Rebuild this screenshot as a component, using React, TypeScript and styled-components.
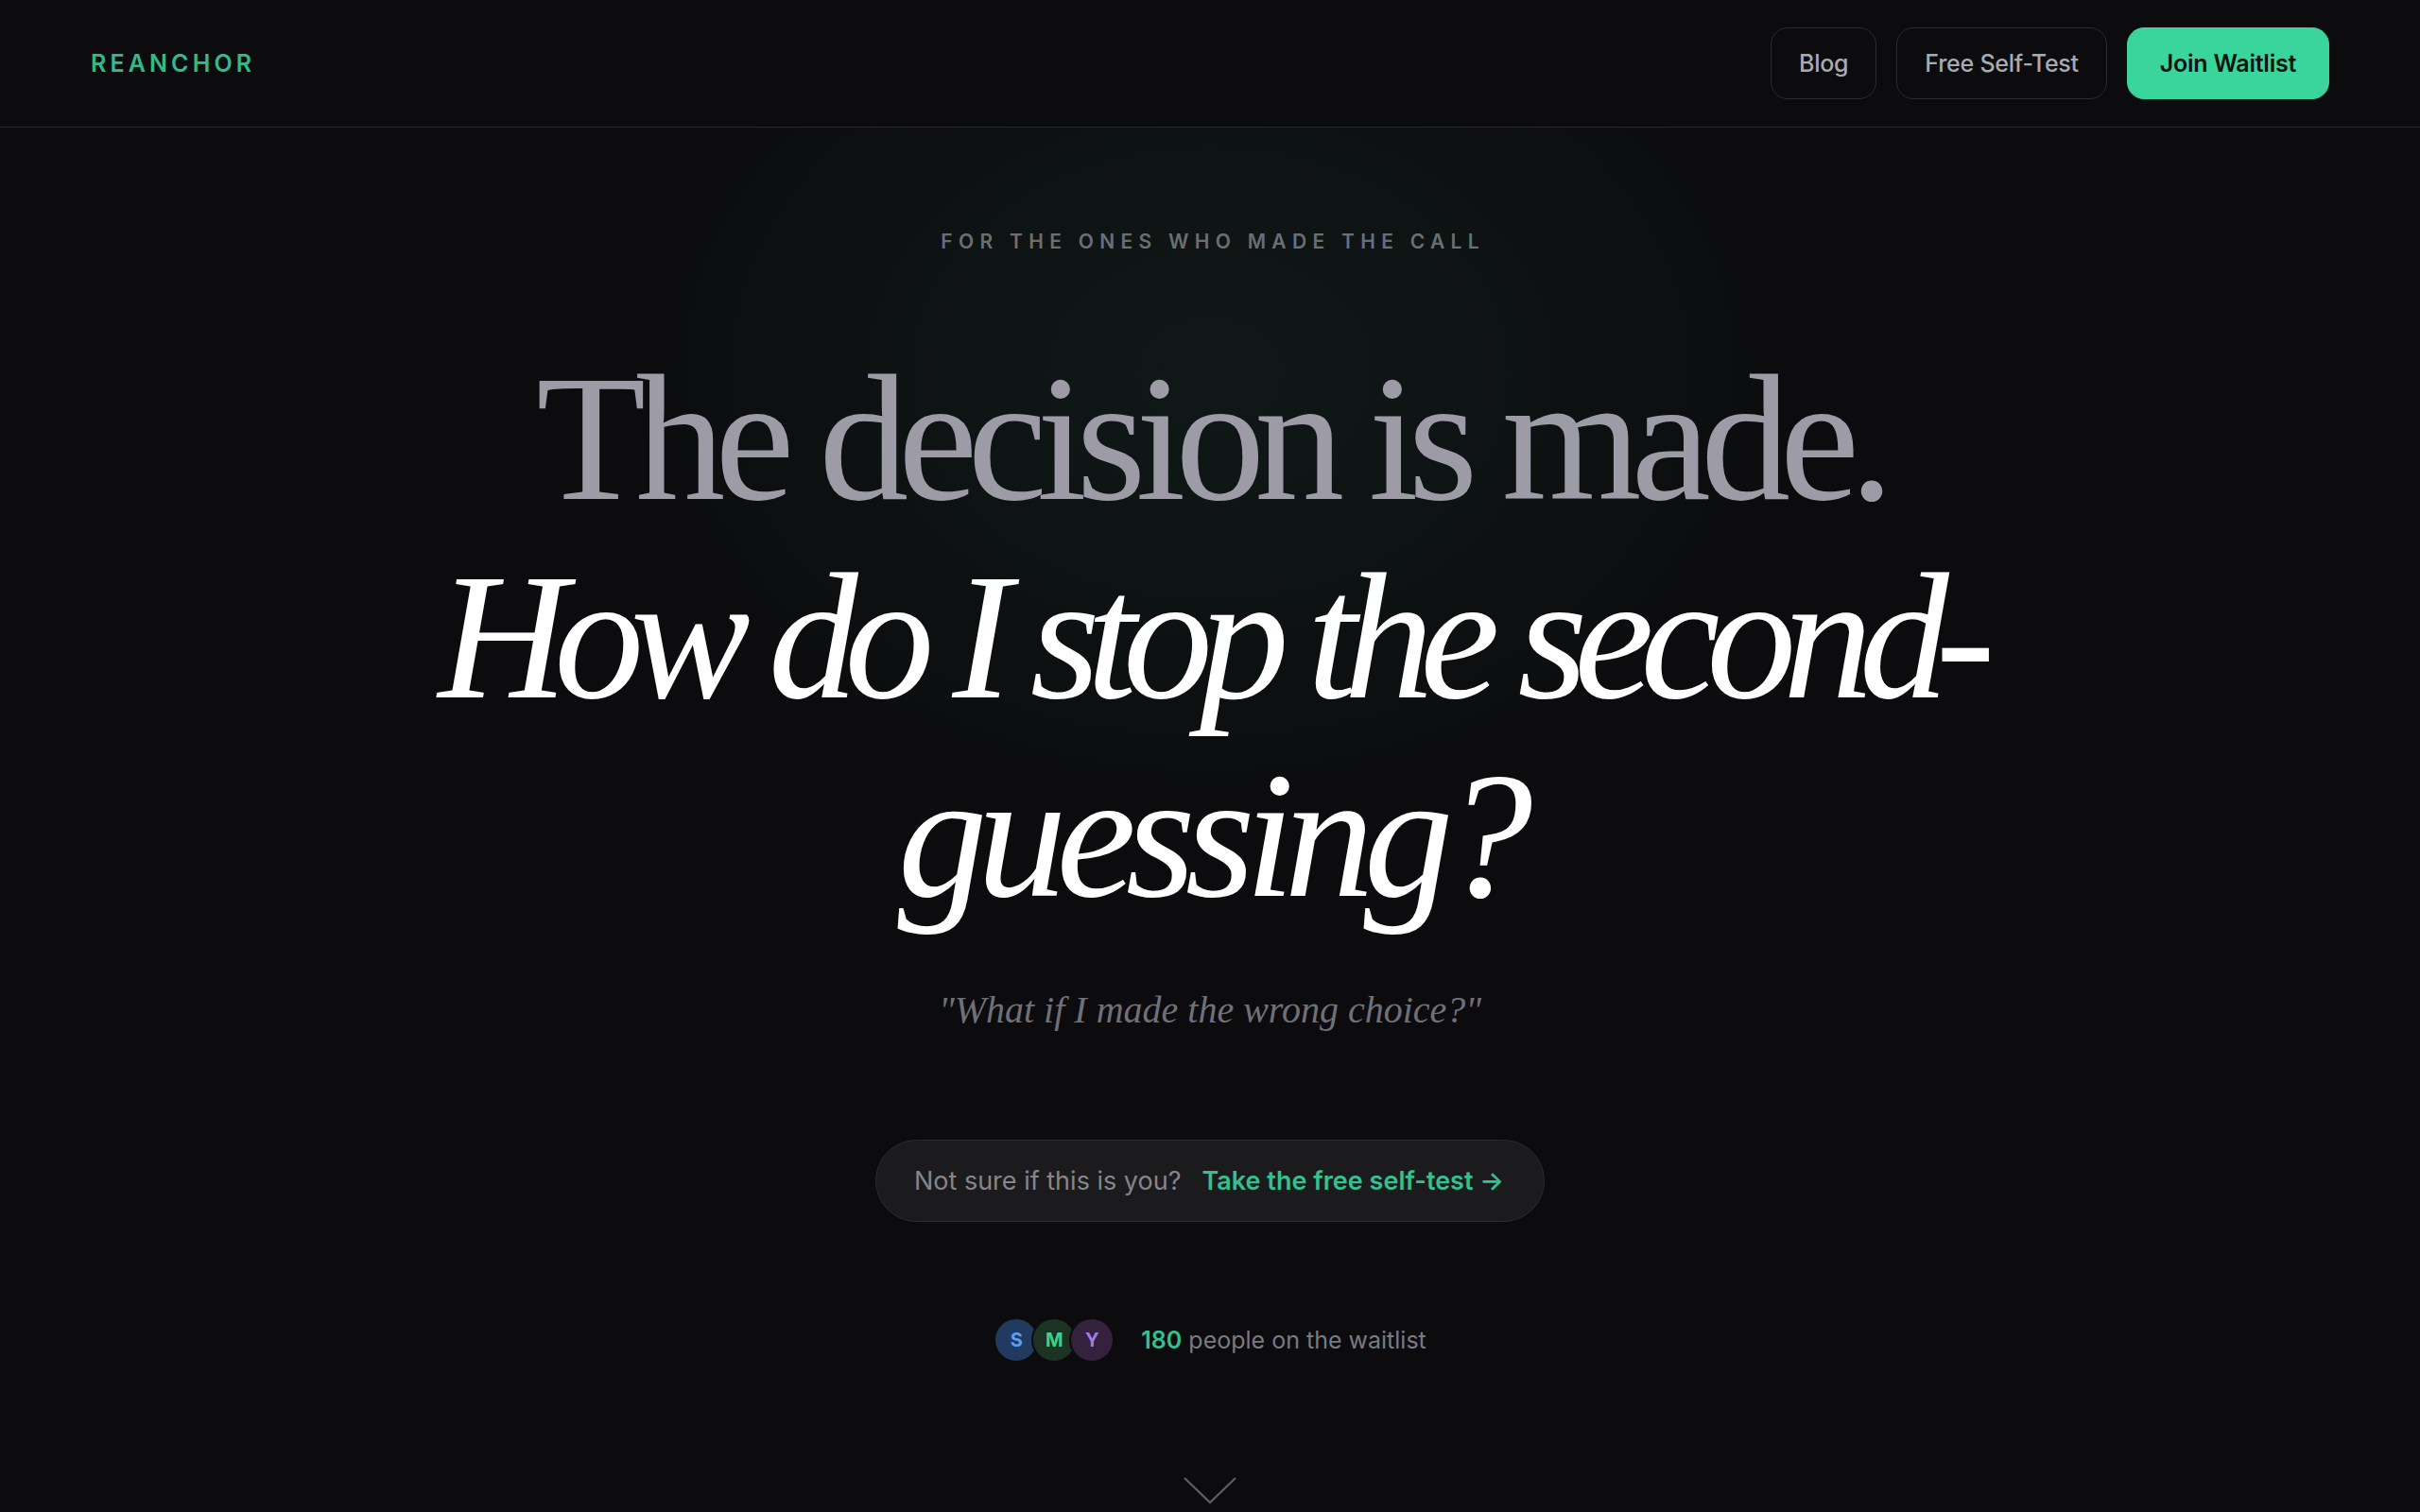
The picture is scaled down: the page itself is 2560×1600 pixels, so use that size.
import styled, { createGlobalStyle } from 'styled-components';

const GlobalStyle = createGlobalStyle`
  html, body {
    margin: 0;
    padding: 0;
    background: #0c0c0e;
  }
  body {
    font-family: Inter, "Noto Sans", sans-serif;
    color: #fff;
    -webkit-font-smoothing: antialiased;
  }
`;

// avatars next to the waitlist count
const AVATARS = [
  { letter: 'S', bg: '#223a5f', fg: '#5d9cf2' },
  { letter: 'M', bg: '#1c3324', fg: '#3fcf8e' },
  { letter: 'Y', bg: '#33213d', fg: '#a47ce6' },
];

const WAITLIST_COUNT = 180;

export default function App() {
  return (
    <Page>
      <GlobalStyle />
      <Header>
        <Logo>REANCHOR</Logo>
        <Nav>
          <NavButton>Blog</NavButton>
          <NavButton>Free Self-Test</NavButton>
          <NavButton $primary>Join Waitlist</NavButton>
        </Nav>
      </Header>

      <Hero>
        <Eyebrow>For the ones who made the call</Eyebrow>
        <Headline>
          <Lead>The decision is made.</Lead>
          <Question>How do I stop the second-</Question>
          <Question $tail>guessing?</Question>
        </Headline>
        <Quote>"What if I made the wrong choice?"</Quote>

        <TestPill>
          <PillMuted>Not sure if this is you?</PillMuted>
          <PillLink>Take the free self-test →</PillLink>
        </TestPill>

        <Waitlist>
          <AvatarStack>
            {AVATARS.map((a) => (
              <Avatar key={a.letter} $bg={a.bg} $fg={a.fg}>
                {a.letter}
              </Avatar>
            ))}
          </AvatarStack>
          <WaitlistText>
            <strong>{WAITLIST_COUNT}</strong> people on the waitlist
          </WaitlistText>
        </Waitlist>

        <ScrollCue>
          <svg width="58" height="30" viewBox="0 0 58 30" fill="none">
            <path d="M2 2 L29 28 L56 2" stroke="#5e5e64" strokeWidth="2.2" />
          </svg>
        </ScrollCue>
      </Hero>
    </Page>
  );
}

const Page = styled.div`
  min-height: 100vh;
  background: #0c0c0e;
`;

const Header = styled.header`
  box-sizing: border-box;
  height: 135px;
  padding: 0 96px;
  display: flex;
  align-items: center;
  justify-content: space-between;
  border-bottom: 1.5px solid #29292d;
`;

const Logo = styled.div`
  font-size: 25px;
  font-weight: 600;
  letter-spacing: 0.165em;
  color: #34b98a;
`;

const Nav = styled.nav`
  display: flex;
  align-items: center;
  gap: 21px;
`;

const NavButton = styled.button<{ $primary?: boolean }>`
  box-sizing: border-box;
  height: 76px;
  padding: 0 ${(p) => (p.$primary ? 34 : 29)}px;
  border-radius: 18px;
  border: 1.5px solid ${(p) => (p.$primary ? '#3ad59c' : '#2c2c31')};
  background: ${(p) => (p.$primary ? '#3ad59c' : 'transparent')};
  color: ${(p) => (p.$primary ? '#0b1410' : '#a9a9b0')};
  font-family: Inter, "Noto Sans", sans-serif;
  font-size: 25px;
  font-weight: ${(p) => (p.$primary ? 600 : 500)};
  letter-spacing: -0.01em;
  cursor: pointer;
`;

const Hero = styled.main`
  display: flex;
  flex-direction: column;
  align-items: center;
  padding-top: 108px;
  background: radial-gradient(ellipse 820px 620px at 50% 260px, rgba(34, 92, 72, 0.16), rgba(12, 12, 14, 0) 75%);
`;

const Eyebrow = styled.p`
  margin: 0;
  padding-left: 0.3em;
  font-size: 21px;
  line-height: 25px;
  font-weight: 600;
  letter-spacing: 0.3em;
  text-transform: uppercase;
  color: #6b6e73;
`;

const Headline = styled.h1`
  margin: 91px 0 0;
  font-family: "Liberation Serif", "DejaVu Serif", serif;
  font-weight: 400;
  font-size: 190px;
  line-height: 210px;
  text-align: center;
`;

const Lead = styled.span`
  display: block;
  color: #9d9ca6;
  letter-spacing: -0.058em;
`;

const Question = styled.span<{ $tail?: boolean }>`
  display: block;
  font-style: italic;
  color: #ffffff;
  letter-spacing: ${(p) => (p.$tail ? '-0.058em' : '-0.075em')};
`;

const Quote = styled.p`
  margin: 56px 0 0;
  font-family: "Liberation Serif", "DejaVu Serif", serif;
  font-style: italic;
  font-size: 40px;
  line-height: 48px;
  color: #707077;
`;

const TestPill = styled.a`
  box-sizing: border-box;
  margin-top: 113px;
  height: 87px;
  padding: 0 42px 0 40px;
  display: inline-flex;
  align-items: center;
  gap: 22px;
  border-radius: 999px;
  background: #1b1b1e;
  border: 1.5px solid #2b2b30;
  font-size: 27px;
  cursor: pointer;
`;

const PillMuted = styled.span`
  color: #85858c;
`;

const PillLink = styled.span`
  color: #34c08f;
  font-weight: 600;
`;

const Waitlist = styled.div`
  margin-top: 101px;
  display: flex;
  align-items: center;
  gap: 28px;
`;

const AvatarStack = styled.div`
  display: flex;
`;

const Avatar = styled.div<{ $bg: string; $fg: string }>`
  box-sizing: border-box;
  width: 48px;
  height: 48px;
  border-radius: 50%;
  border: 2px solid #0c0c0e;
  background: ${(p) => p.$bg};
  color: ${(p) => p.$fg};
  display: flex;
  align-items: center;
  justify-content: center;
  font-size: 20px;
  font-weight: 700;
  & + & {
    margin-left: -8px;
  }
`;

const WaitlistText = styled.span`
  font-size: 25px;
  color: #7a7a81;
  > strong {
    color: #34c08f;
    font-weight: 600;
  }
`;

const ScrollCue = styled.div`
  margin-top: 120px;
  display: flex;
  justify-content: center;
`;
